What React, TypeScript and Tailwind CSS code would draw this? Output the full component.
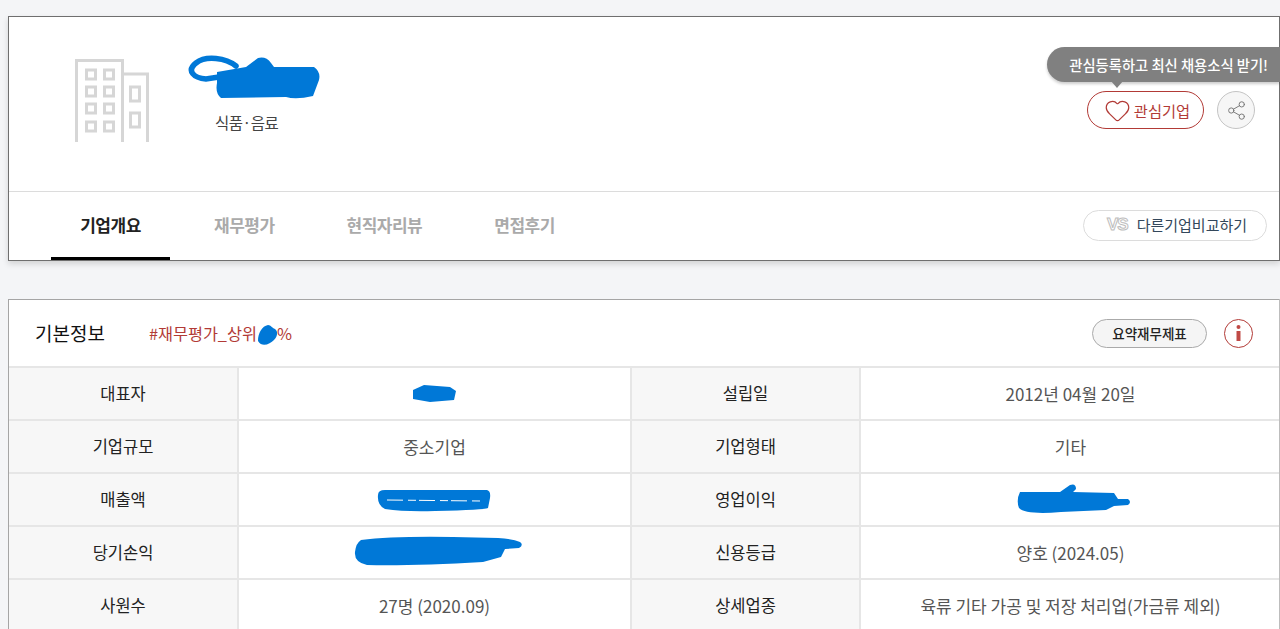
import { Heart, Share2 } from "lucide-react";

const FONT = "font-['Noto_Sans_CJK_KR','Noto_Sans',sans-serif]";

function BuildingIcon() {
  return (
    <svg width="76" height="84" viewBox="0 0 76 84" fill="none" stroke="#d6d6d6" strokeWidth="3">
      <path d="M1.5 83V1.5H47.500V83" />
      <path d="M47.500 15H72.500V83" />
      {[11, 28, 45, 63].map((y) => (
        <g key={y}>
          <rect x="11.500" y={y} width="9" height="9" />
          <rect x="29.500" y={y} width="9" height="9" />
        </g>
      ))}
      <rect x="55.500" y="28" width="9" height="14" />
      <rect x="55.500" y="54" width="9" height="14" />
    </svg>
  );
}

// pen marks that cover private values in the screenshot
function Scribble({ className, width, height, children }: { className: string; width: number; height: number; children: React.ReactNode }) {
  return (
    <svg className={`absolute ${className}`} width={width} height={height} viewBox={`0 0 ${width} ${height}`} fill="#0078d7">
      {children}
    </svg>
  );
}

function Tab({ label, active }: { label: string; active?: boolean }) {
  return (
    <div
      className={`flex h-full items-center justify-center text-[17px] font-bold tracking-[-0.5px] ${
        active ? "w-[119px] border-b-[3px] border-black text-[#222]" : "text-[#aaa]"
      }`}
    >
      {label}
    </div>
  );
}

function Th({ children }: { children: string }) {
  return <div className="flex items-center justify-center border-r-2 border-[#e6e6e6] bg-[#f7f7f7] text-[16.500px] text-[#222]">{children}</div>;
}

function Td({ children, last }: { children?: string; last?: boolean }) {
  return (
    <div className={`flex items-center justify-center text-[17px] text-[#555] ${last ? "" : "border-r-2 border-[#e6e6e6]"}`}>
      {children}
    </div>
  );
}

function Row({ a, b, c, d }: { a: string; b?: string; c: string; d?: string }) {
  return (
    <div className="grid h-[53px] grid-cols-[230px_393px_229px_1fr] border-b-2 border-[#e6e6e6]">
      <Th>{a}</Th>
      <Td>{b}</Td>
      <Th>{c}</Th>
      <Td last>{d}</Td>
    </div>
  );
}

export default function App() {
  return (
    <div className={`relative h-[629px] overflow-hidden bg-[#f4f5f7] pl-2 pt-4 ${FONT}`}>
      <section className="relative h-[245px] border border-[#6f6f6f] bg-white shadow-[0_3px_6px_rgba(0,0,0,0.14)]">
        <div className="flex h-[175px] items-start border-b border-[#dcdcdc] pl-[66px] pt-[42px]">
          <BuildingIcon />
          <p className="ml-[64px] mt-[52px] text-[15.500px] tracking-[-0.5px] text-[#444]">식품·음료</p>
        </div>
        <div className="flex h-[68px] items-center pl-[42px] pr-3">
          <Tab label="기업개요" active />
          <div className="ml-[44px] flex h-full gap-[72px] pb-[3px]">
            <Tab label="재무평가" />
            <Tab label="현직자리뷰" />
            <Tab label="면접후기" />
          </div>
          <button className="ml-auto mb-[2px] flex h-[31px] w-[184px] items-center justify-center gap-[9px] rounded-full border border-[#dcdcdc] pl-[4px] text-[15px] text-[#33475b]">
            <span className="font-['Liberation_Sans',sans-serif] text-[17px] font-bold tracking-[-1px] text-white [-webkit-text-stroke:1px_#bdbdbd]">VS</span>
            다른기업비교하기
          </button>
        </div>
        <div className="absolute left-[1038px] top-[30px] flex h-[35px] w-[233px] items-center justify-end rounded-l-full bg-[#808080] pr-[12px] text-[14.300px] font-medium text-white shadow-[0_2px_3px_rgba(0,0,0,0.2)]">
          관심등록하고 최신 채용소식 받기!
          <span className="absolute left-[64px] top-[34px] h-0 w-0 border-x-[6px] border-t-[7px] border-x-transparent border-t-[#808080]" />
        </div>
        <div className="absolute left-[1078px] top-[74px] flex items-center gap-[13px]">
          <button className="flex h-[38px] w-[117px] items-center justify-center gap-[3px] rounded-full border border-[#b23a36] bg-white pl-[3px] text-[15.300px] text-[#b23a36]">
            <Heart className="h-[27px] w-[27px]" strokeWidth={1.1} />
            관심기업
          </button>
          <div className="flex h-[38px] w-[38px] items-center justify-center rounded-full border border-[#c4c4c4] bg-[#f6f6f6] text-[#777]">
            <Share2 className="h-[21px] w-[21px]" strokeWidth={1.1} />
          </div>
        </div>
      </section>

      <section className="mt-[38px] border-l border-t border-[#a5a5a5] bg-white">
        <div className="flex h-[68px] items-center border-b-2 border-[#e6e6e6] pl-[26px] pr-[27px]">
          <h2 className="text-[19px] text-[#111]">기본정보</h2>
          <span className="ml-[44px] w-[143px] whitespace-nowrap text-[16.300px] text-[#b23a36]">
            #재무평가_상위<span className="ml-[20px]">%</span>
          </span>
          <button className="ml-auto flex h-[29px] w-[115px] items-center justify-center rounded-full border border-[#aaa] bg-[#f5f5f5] text-[13.500px] font-medium text-[#222]">
            요약재무제표
          </button>
          <div className="ml-[17px] flex h-[29px] w-[29px] items-center justify-center rounded-full border border-[#b23a36] text-[#c04a46]">
            <svg width="5" height="16" viewBox="0 0 5 16" fill="currentColor">
              <circle cx="2.500" cy="2" r="2" />
              <path d="M0.500 6H4.500V16H0.500Z" />
            </svg>
          </div>
        </div>
        <Row a="대표자" c="설립일" d="2012년 04월 20일" />
        <Row a="기업규모" b="중소기업" c="기업형태" d="기타" />
        <Row a="매출액" c="영업이익" />
        <Row a="당기손익" c="신용등급" d="양호 (2024.05)" />
        <Row a="사원수" b="27명 (2020.09)" c="상세업종" d="육류 기타 가공 및 저장 처리업(가금류 제외)" />
      </section>

      <div className="absolute right-0 top-[299px] h-[330px] w-px bg-[#bdbdbd]" />

      <Scribble className="left-[186px] top-[53px]" width={138} height={50}>
        <path d="M50 13C40 5 20 2 10 10C0 18 8 25 20 26L33 24" fill="none" stroke="#0078d7" strokeWidth={5.500} strokeLinecap="round" />
        <path d="M31 19L60 14L72 5Q80 3 85 10L88 14L128 14Q135 19 133 27L127 43Q110 47 100 44L35 45Q29 40 31 30Z" />
      </Scribble>
      <Scribble className="left-[256px] top-[323px]" width={24} height={26}>
        <path d="M2 18C2 10 6 3 12 2C15 2 16 5 19 6C22 8 22 13 18 17C14 21 6 25 2 18Z" />
      </Scribble>
      <Scribble className="left-[410px] top-[383px]" width={50} height={20}>
        <path d="M3 7L14 2L40 4L46 8L44 17L20 19L3 16Z" />
      </Scribble>
      <Scribble className="left-[375px] top-[488px]" width={118} height={26}>
        <path d="M3 7Q3 2 10 2L112 2Q116 3 115 10L113 20Q110 22 60 23Q30 24 10 21Q2 17 3 7Z" />
        <path d="M12 12L105 13" fill="none" stroke="#ffffff" strokeWidth={1} strokeDasharray="16 5 8 3" />
      </Scribble>
      <Scribble className="left-[1016px] top-[482px]" width={118} height={34}>
        <path d="M4 10L44 10L54 3Q60 1 60 7L57 10L98 11L102 17L112 17Q116 20 112 23L98 24L90 28L45 30Q10 33 3 26Q0 18 4 10Z" />
      </Scribble>
      <Scribble className="left-[353px] top-[534px]" width={172} height={34}>
        <path d="M8 6Q40 2 100 3L145 4Q160 5 167 8Q171 11 166 14L152 15L148 23L130 28Q60 32 14 31Q1 28 2 18Q3 9 8 6Z" />
      </Scribble>
    </div>
  );
}
